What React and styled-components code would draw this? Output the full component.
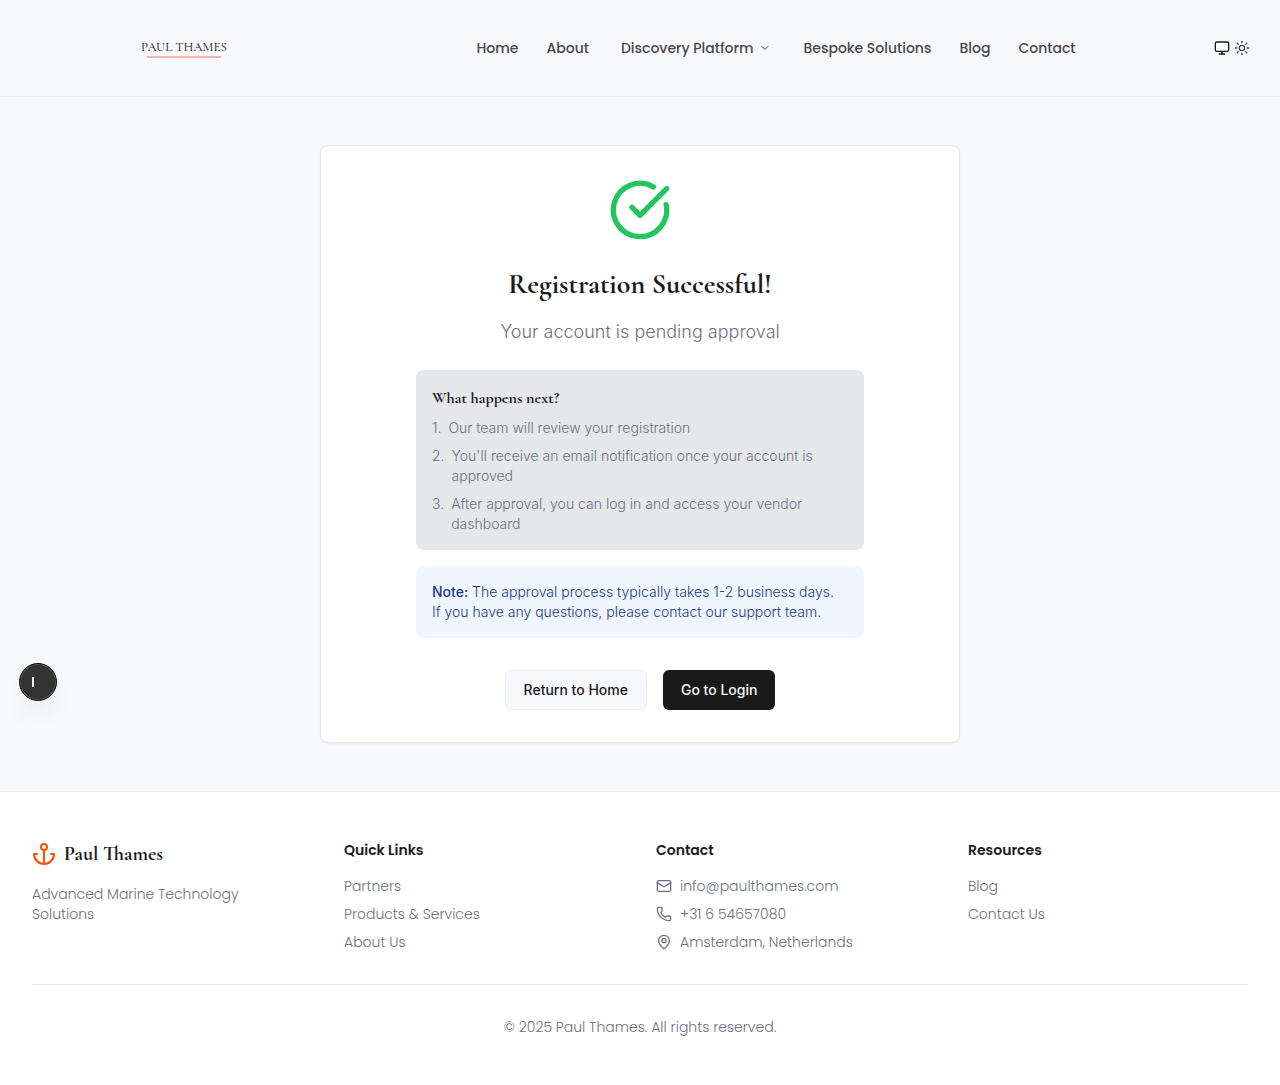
import React from "react";
import styled, { createGlobalStyle, css } from "styled-components";
import { ChevronDown, CircleCheckBig, Mail, MapPin, Monitor, Phone, Sun } from "lucide-react";

const sans = `"Inter", "Liberation Sans", sans-serif`;
const geometric = `"Poppins", "Inter", "Liberation Sans", sans-serif`;
const serif = `"Cormorant Garamond", "Liberation Serif", serif`;

const color = {
  ink: "#1a1a1a",
  nav: "#484848",
  muted: "#6b7280",
  line: "#e5e7eb",
  page: "#f8f9fd",
  accent: "#ff4d00",
};

const GlobalStyle = createGlobalStyle`
  *, *::before, *::after { box-sizing: border-box; }
  body {
    margin: 0;
    background: ${color.page};
    color: ${color.ink};
    font-family: ${sans};
    font-size: 14px;
    line-height: 20px;
    font-weight: 300;
  }
  h1, h2, h3, p, ul, ol { margin: 0; padding: 0; }
  ul, ol { list-style: none; }
  a { color: inherit; text-decoration: none; }
  button { font: inherit; cursor: pointer; }
  svg { display: block; flex-shrink: 0; }
`;

const Page = styled.div`
  display: flex;
  flex-direction: column;
  min-height: 100vh;
`;

const Header = styled.header`
  display: flex;
  align-items: center;
  justify-content: space-between;
  padding: 0 24px;
  border-bottom: 1px solid ${color.line};
`;

const LogoLink = styled.a`
  display: flex;
  justify-content: center;
  align-items: center;
  width: 320px;
  height: 96px;
`;

const LogoText = styled.span`
  display: flex;
  flex-direction: column;
  align-items: center;
  font-family: ${serif};
  font-size: 13px;
  line-height: 18px;
  font-weight: 500;
  color: #333;

  &::after {
    content: "";
    width: 74px;
    height: 2px;
    background: #fbb4a9;
  }
`;

const Nav = styled.nav`
  display: flex;
  align-items: center;
  gap: 28px;
  font-family: ${geometric};
  font-weight: 500;
  color: ${color.nav};
`;

const NavMenu = styled.button`
  display: flex;
  align-items: center;
  gap: 6px;
  padding: 0 4px;
  border: 0;
  background: none;
  color: inherit;
`;

const ThemeSwitch = styled.div`
  display: flex;
  justify-content: center;
  gap: 4px;
  width: 48px;
`;

const IconButton = styled.button`
  padding: 0;
  border: 0;
  background: none;
  color: ${(p) => (p.$active ? color.ink : color.nav)};
`;

const Main = styled.main`
  flex: 1;
  padding: 48px 16px;
`;

const Card = styled.section`
  display: flex;
  flex-direction: column;
  align-items: center;
  max-width: 640px;
  margin: 0 auto;
  padding: 32px;
  background: #fff;
  border: 1px solid ${color.line};
  border-radius: 8px;
  box-shadow: 0 1px 2px rgba(0, 0, 0, 0.06);
`;

const Title = styled.h1`
  margin-top: 24px;
  font-family: ${serif};
  font-size: 28px;
  line-height: 36px;
  font-weight: 700;
`;

const Subtitle = styled.p`
  margin-top: 16px;
  font-size: 18px;
  line-height: 28px;
  color: ${color.muted};
`;

const Panels = styled.div`
  display: flex;
  flex-direction: column;
  gap: 16px;
  width: 100%;
  max-width: 448px;
  margin: 24px 0 32px;
`;

const Panel = styled.div`
  padding: ${(p) => (p.$info ? "16px 24px 16px 16px" : "16px")};
  border-radius: 8px;
  background: ${(p) => (p.$info ? "#eff6ff" : color.line)};
  color: ${(p) => (p.$info ? "#1e3a8a" : color.muted)};

  strong { font-weight: 500; }
`;

const PanelTitle = styled.h2`
  margin-bottom: 8px;
  font-family: ${serif};
  font-size: 16px;
  line-height: 24px;
  font-weight: 700;
  color: ${color.ink};
`;

const Steps = styled.ol`
  display: flex;
  flex-direction: column;
  gap: 8px;
`;

const Step = styled.li`
  display: flex;
  gap: 7px;
`;

const Actions = styled.div`
  display: flex;
  gap: 16px;
`;

const Action = styled.button`
  height: 40px;
  padding: 0 18px;
  border-radius: 6px;
  font-weight: 500;
  ${(p) =>
    p.$primary
      ? css`
          border: 0;
          background: ${color.ink};
          color: ${color.page};
        `
      : css`
          border: 1px solid #eff0f4;
          background: ${color.page};
          color: ${color.ink};
        `}
`;

const Footer = styled.footer`
  padding: 48px 32px;
  background: #fff;
  border-top: 1px solid ${color.line};
  font-family: ${geometric};
  color: ${color.muted};
`;

const Columns = styled.div`
  display: grid;
  grid-template-columns: repeat(4, 1fr);
  gap: 32px;
`;

const Brand = styled.a`
  display: flex;
  align-items: center;
  gap: 8px;
  margin-bottom: 16px;
  font-family: ${serif};
  font-size: 20px;
  line-height: 28px;
  font-weight: 700;
  color: ${color.ink};
`;

const Tagline = styled.p`
  max-width: 256px;
`;

const ColumnTitle = styled.h3`
  margin-bottom: 16px;
  font-size: 14px;
  line-height: 20px;
  font-weight: 600;
  color: ${color.ink};
`;

const List = styled.ul`
  display: flex;
  flex-direction: column;
  gap: 8px;
`;

const ContactItem = styled.li`
  display: flex;
  align-items: center;
  gap: 8px;
`;

const Copyright = styled.p`
  margin-top: 32px;
  padding: 32px 0 0;
  border-top: 1px solid ${color.line};
  text-align: center;
`;

const Floating = styled.button`
  position: fixed;
  left: 19px;
  top: 663px;
  display: flex;
  align-items: center;
  width: 38px;
  height: 38px;
  padding: 0 0 0 12px;
  border: 1px solid #111;
  border-radius: 50%;
  background: #333;
  box-shadow: inset 0 0 0 1px #555, 0 16px 24px rgba(0, 0, 0, 0.04);
`;

const steps = [
  "Our team will review your registration",
  "You'll receive an email notification once your account is approved",
  "After approval, you can log in and access your vendor dashboard",
];

function AnchorIcon() {
  return (
    <svg
      width="24"
      height="24"
      viewBox="0 0 24 24"
      fill="none"
      stroke={color.accent}
      strokeWidth="2"
      strokeLinecap="round"
      strokeLinejoin="round"
      aria-hidden="true"
    >
      <path d="M12 22V8" />
      <path d="M5 12H2a10 10 0 0 0 20 0h-3" />
      <circle cx="12" cy="5" r="3" />
    </svg>
  );
}

function LinkColumn({ title, links }) {
  return (
    <div>
      <ColumnTitle>{title}</ColumnTitle>
      <List>
        {links.map((label) => (
          <li key={label}><a href="#">{label}</a></li>
        ))}
      </List>
    </div>
  );
}

export default function App() {
  return (
    <Page>
      <GlobalStyle />
      <Header>
        <LogoLink href="#"><LogoText>PAUL THAMES</LogoText></LogoLink>
        <Nav>
          <a href="#">Home</a>
          <a href="#">About</a>
          <NavMenu type="button">Discovery Platform <ChevronDown size={12} /></NavMenu>
          <a href="#">Bespoke Solutions</a>
          <a href="#">Blog</a>
          <a href="#">Contact</a>
        </Nav>
        <ThemeSwitch>
          <IconButton type="button" aria-label="System theme" $active><Monitor size={16} /></IconButton>
          <IconButton type="button" aria-label="Light theme"><Sun size={16} /></IconButton>
        </ThemeSwitch>
      </Header>

      <Main>
        <Card>
          <CircleCheckBig size={64} color="#22c55e" />
          <Title>Registration Successful!</Title>
          <Subtitle>Your account is pending approval</Subtitle>
          <Panels>
            <Panel>
              <PanelTitle>What happens next?</PanelTitle>
              <Steps>
                {steps.map((text, i) => (
                  <Step key={text}><span>{i + 1}.</span><span>{text}</span></Step>
                ))}
              </Steps>
            </Panel>
            <Panel $info>
              <p>
                <strong>Note:</strong> The approval process typically takes 1-2 business days.
                If you have any questions, please contact our support team.
              </p>
            </Panel>
          </Panels>
          <Actions>
            <Action type="button">Return to Home</Action>
            <Action type="button" $primary>Go to Login</Action>
          </Actions>
        </Card>
      </Main>

      <Footer>
        <Columns>
          <div>
            <Brand href="#"><AnchorIcon />Paul Thames</Brand>
            <Tagline>Advanced Marine Technology Solutions</Tagline>
          </div>
          <LinkColumn title="Quick Links" links={["Partners", "Products & Services", "About Us"]} />
          <div>
            <ColumnTitle>Contact</ColumnTitle>
            <List>
              <ContactItem><Mail size={16} /><a href="mailto:info@paulthames.com">info@paulthames.com</a></ContactItem>
              <ContactItem><Phone size={16} /><a href="tel:+31654657080">+31 6 54657080</a></ContactItem>
              <ContactItem><MapPin size={16} />Amsterdam, Netherlands</ContactItem>
            </List>
          </div>
          <LinkColumn title="Resources" links={["Blog", "Contact Us"]} />
        </Columns>
        <Copyright>© 2025 Paul Thames. All rights reserved.</Copyright>
      </Footer>

      <Floating type="button" aria-label="Open widget">
        <svg width="2" height="10" viewBox="0 0 2 10"><rect width="2" height="10" fill="#fff" /></svg>
      </Floating>
    </Page>
  );
}
